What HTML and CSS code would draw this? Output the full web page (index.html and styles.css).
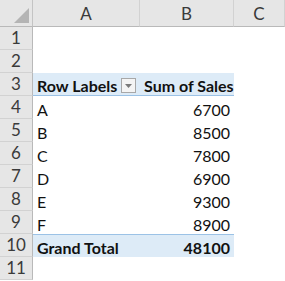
FILE: index.html
```html
<!DOCTYPE html>
<html>
<head>
<meta charset="utf-8">
<link rel="stylesheet" href="styles.css">
</head>
<body>
<div class="sheet">
  <div class="hd corner"><span class="tri"></span></div>
  <div class="hd colh">A</div>
  <div class="hd colh">B</div>
  <div class="hd colh">C</div>

  <div class="hd rowh">1</div><div class="c"></div><div class="c"></div><div class="c"></div>
  <div class="hd rowh">2</div><div class="c"></div><div class="c"></div><div class="c"></div>

  <div class="hd rowh">3</div>
  <div class="c pv pvhead b lab">Row Labels <span class="dd"><svg width="7" height="4" viewBox="0 0 7 4"><path d="M0 0h7L3.5 4z" fill="#7a7a7a"/></svg></span></div>
  <div class="c pv pvhead b">Sum of Sales</div>
  <div class="c"></div>

  <div class="hd rowh">4</div><div class="c">A</div><div class="c num">6700</div><div class="c"></div>
  <div class="hd rowh">5</div><div class="c">B</div><div class="c num">8500</div><div class="c"></div>
  <div class="hd rowh">6</div><div class="c">C</div><div class="c num">7800</div><div class="c"></div>
  <div class="hd rowh">7</div><div class="c">D</div><div class="c num">6900</div><div class="c"></div>
  <div class="hd rowh">8</div><div class="c">E</div><div class="c num">9300</div><div class="c"></div>
  <div class="hd rowh">9</div><div class="c">F</div><div class="c num">8900</div><div class="c"></div>

  <div class="hd rowh">10</div>
  <div class="c pv pvtot b">Grand Total</div>
  <div class="c pv pvtot b num">48100</div>
  <div class="c"></div>

  <div class="hd rowh">11</div><div class="c"></div><div class="c"></div><div class="c"></div>
</div>
</body>
</html>
```
FILE: styles.css
```css
* { box-sizing: border-box; }
html, body { margin: 0; padding: 0; background: #fff; }
.sheet {
  display: grid;
  grid-template-columns: 33px 107px 94px 51px;
  grid-template-rows: 27px repeat(11, 23px);
  font-family: Lato, "Open Sans", sans-serif;
  font-size: 16px;
  color: #111;
  width: 285px;
  height: 281px;
  overflow: hidden;
}
.hd {
  background: #e6e6e6;
  color: #3a3a3a;
  display: flex;
  align-items: flex-end;
  justify-content: center;
  padding-bottom: 1px;
  font-size: 17px;
}
.corner {
  position: relative;
  border-right: 1px solid #c4c4c4;
  border-bottom: 1px solid #b9b9b9;
}
.tri {
  position: absolute;
  right: 3px;
  bottom: 3px;
  width: 0;
  height: 0;
  border-left: 15px solid transparent;
  border-bottom: 15px solid #b4b4b4;
}
.colh {
  border-right: 1px solid #d2d2d2;
  border-bottom: 1px solid #b9b9b9;
  padding-bottom: 2px;
}
.rowh {
  border-right: 1px solid #b9b9b9;
  border-bottom: 1px solid #d2d2d2;
}
.c {
  display: flex;
  align-items: flex-end;
  padding: 0 4px 0 4px;
  white-space: nowrap;
}
.num { justify-content: flex-end; }
.b { font-weight: 700; }
.pv { background: #ddebf7; }
.pvhead { border-bottom: 1px solid #9bc2e6; }
.pvtot { border-top: 1px solid #9bc2e6; }
.lab { gap: 4px; }
.dd {
  display: inline-flex;
  align-items: center;
  justify-content: center;
  width: 15px;
  height: 15px;
  margin-bottom: 2px;
  background: #f4f4f4;
  border: 1px solid #a8a8a8;
}
```
